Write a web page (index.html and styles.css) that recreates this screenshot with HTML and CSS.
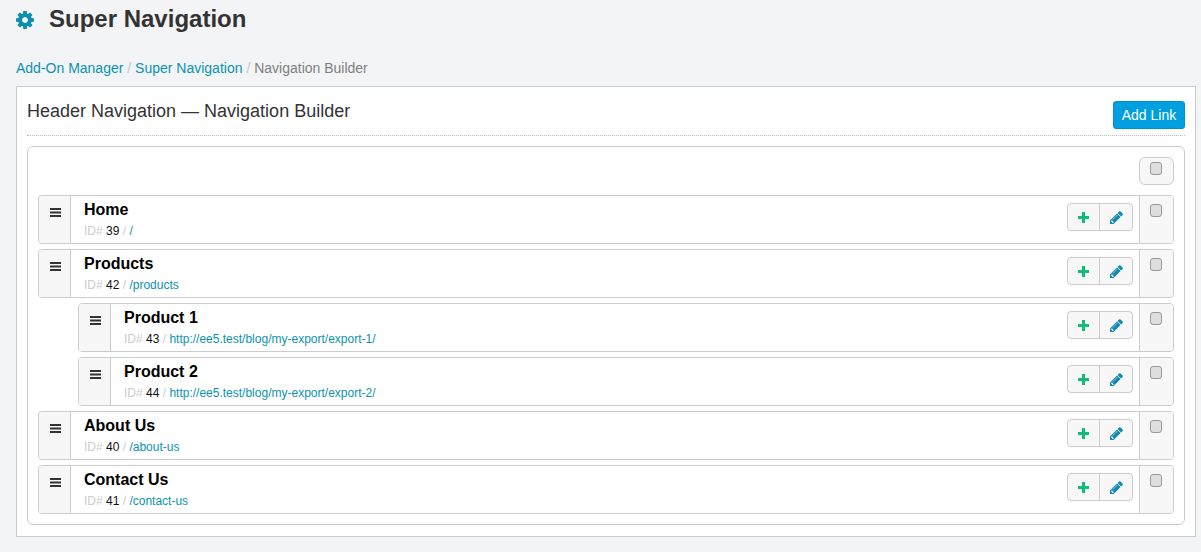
FILE: index.html
```html
<!DOCTYPE html>
<html lang="en">
<head>
<meta charset="utf-8">
<title>Super Navigation</title>
<link rel="stylesheet" href="styles.css">
</head>
<body>
<header class="page-head">
  <svg class="gear" viewBox="0 0 1536 1536"><path d="M1024 768q0-106-75-181t-181-75-181 75-75 181 75 181 181 75 181-75 75-181zm512-109v222q0 12-8 23t-20 13l-185 28q-19 54-39 91 35 50 107 138 10 12 10 25t-9 23q-27 37-99 108t-94 71q-12 0-26-9l-138-108q-44 23-91 38-16 136-29 186-7 28-36 28h-222q-14 0-24.500-8.500t-11.500-21.500l-28-184q-49-16-90-37l-141 107q-10 9-25 9-14 0-25-11-126-114-165-168-7-10-7-23 0-12 8-23 15-21 51-66.500t54-70.500q-27-50-41-99l-183-27q-13-2-21-12.500t-8-23.500v-222q0-12 8-23t19-13l186-28q14-46 39-92-40-57-107-138-10-12-10-24 0-10 9-23 26-36 98.500-107.500t94.500-71.500q13 0 26 10l138 107q44-23 91-38 16-136 29-186 7-28 36-28h222q14 0 24.500 8.500t11.500 21.500l28 184q49 16 90 37l142-107q9-9 24-9 13 0 25 10 129 119 165 170 7 8 7 22 0 12-8 23-15 21-51 66.500t-54 70.500q26 50 41 98l183 28q13 2 21 12.500t8 23.500z"/></svg>
  <h1>Super Navigation</h1>
</header>
<nav class="crumbs"><a href="#">Add-On Manager</a> <span class="sep">/</span> <a href="#">Super Navigation</a> <span class="sep">/</span> <span class="here">Navigation Builder</span></nav>
<main class="panel">
  <div class="panel-head">
    <h2>Header Navigation — Navigation Builder</h2>
    <a class="add" href="#">Add Link</a>
  </div>
  <div class="builder">
    <div class="all"><div class="all-cell"><input type="checkbox" class="check"></div></div>
    <ul class="tree">
      <li><div class="row"><div class="handle"><svg class="bars" viewBox="0 0 11 9"><path d="M0 0h11v2H0zM0 3.500h11v2H0zM0 7h11v2H0z"/></svg></div><div class="info"><div class="name">Home</div><div class="meta"><span class="id">ID#</span> 39 <span class="slash">/</span> <a href="#">/</a></div></div><div class="btns"><a class="btn" href="#"><svg class="plus" viewBox="0 0 11 11"><path d="M4 0h3v4h4v3H7v4H4V7H0V4h4z"/></svg></a><a class="btn" href="#"><svg class="pencil" viewBox="0 0 1536 1536"><path d="M363 1408l91-91-235-235-91 91v107h128v128h107zm523-928q0-22-22-22-10 0-17 7l-542 542q-7 7-7 17 0 22 22 22 10 0 17-7l542-542q7-7 7-17zm-54-192l416 416-832 832h-416v-416zm683 96q0 53-37 90l-166 166-416-416 166-165q36-38 90-38 53 0 91 38l235 234q37 39 37 91z"/></svg></a></div><div class="pick"><input type="checkbox" class="check"></div></div></li>
      <li><div class="row"><div class="handle"><svg class="bars" viewBox="0 0 11 9"><path d="M0 0h11v2H0zM0 3.500h11v2H0zM0 7h11v2H0z"/></svg></div><div class="info"><div class="name">Products</div><div class="meta"><span class="id">ID#</span> 42 <span class="slash">/</span> <a href="#">/products</a></div></div><div class="btns"><a class="btn" href="#"><svg class="plus" viewBox="0 0 11 11"><path d="M4 0h3v4h4v3H7v4H4V7H0V4h4z"/></svg></a><a class="btn" href="#"><svg class="pencil" viewBox="0 0 1536 1536"><path d="M363 1408l91-91-235-235-91 91v107h128v128h107zm523-928q0-22-22-22-10 0-17 7l-542 542q-7 7-7 17 0 22 22 22 10 0 17-7l542-542q7-7 7-17zm-54-192l416 416-832 832h-416v-416zm683 96q0 53-37 90l-166 166-416-416 166-165q36-38 90-38 53 0 91 38l235 234q37 39 37 91z"/></svg></a></div><div class="pick"><input type="checkbox" class="check"></div></div>
        <ul class="tree nested">
          <li><div class="row"><div class="handle"><svg class="bars" viewBox="0 0 11 9"><path d="M0 0h11v2H0zM0 3.500h11v2H0zM0 7h11v2H0z"/></svg></div><div class="info"><div class="name">Product 1</div><div class="meta"><span class="id">ID#</span> 43 <span class="slash">/</span> <a href="#">http://ee5.test/blog/my-export/export-1/</a></div></div><div class="btns"><a class="btn" href="#"><svg class="plus" viewBox="0 0 11 11"><path d="M4 0h3v4h4v3H7v4H4V7H0V4h4z"/></svg></a><a class="btn" href="#"><svg class="pencil" viewBox="0 0 1536 1536"><path d="M363 1408l91-91-235-235-91 91v107h128v128h107zm523-928q0-22-22-22-10 0-17 7l-542 542q-7 7-7 17 0 22 22 22 10 0 17-7l542-542q7-7 7-17zm-54-192l416 416-832 832h-416v-416zm683 96q0 53-37 90l-166 166-416-416 166-165q36-38 90-38 53 0 91 38l235 234q37 39 37 91z"/></svg></a></div><div class="pick"><input type="checkbox" class="check"></div></div></li>
          <li><div class="row"><div class="handle"><svg class="bars" viewBox="0 0 11 9"><path d="M0 0h11v2H0zM0 3.500h11v2H0zM0 7h11v2H0z"/></svg></div><div class="info"><div class="name">Product 2</div><div class="meta"><span class="id">ID#</span> 44 <span class="slash">/</span> <a href="#">http://ee5.test/blog/my-export/export-2/</a></div></div><div class="btns"><a class="btn" href="#"><svg class="plus" viewBox="0 0 11 11"><path d="M4 0h3v4h4v3H7v4H4V7H0V4h4z"/></svg></a><a class="btn" href="#"><svg class="pencil" viewBox="0 0 1536 1536"><path d="M363 1408l91-91-235-235-91 91v107h128v128h107zm523-928q0-22-22-22-10 0-17 7l-542 542q-7 7-7 17 0 22 22 22 10 0 17-7l542-542q7-7 7-17zm-54-192l416 416-832 832h-416v-416zm683 96q0 53-37 90l-166 166-416-416 166-165q36-38 90-38 53 0 91 38l235 234q37 39 37 91z"/></svg></a></div><div class="pick"><input type="checkbox" class="check"></div></div></li>
        </ul>
      </li>
      <li><div class="row"><div class="handle"><svg class="bars" viewBox="0 0 11 9"><path d="M0 0h11v2H0zM0 3.500h11v2H0zM0 7h11v2H0z"/></svg></div><div class="info"><div class="name">About Us</div><div class="meta"><span class="id">ID#</span> 40 <span class="slash">/</span> <a href="#">/about-us</a></div></div><div class="btns"><a class="btn" href="#"><svg class="plus" viewBox="0 0 11 11"><path d="M4 0h3v4h4v3H7v4H4V7H0V4h4z"/></svg></a><a class="btn" href="#"><svg class="pencil" viewBox="0 0 1536 1536"><path d="M363 1408l91-91-235-235-91 91v107h128v128h107zm523-928q0-22-22-22-10 0-17 7l-542 542q-7 7-7 17 0 22 22 22 10 0 17-7l542-542q7-7 7-17zm-54-192l416 416-832 832h-416v-416zm683 96q0 53-37 90l-166 166-416-416 166-165q36-38 90-38 53 0 91 38l235 234q37 39 37 91z"/></svg></a></div><div class="pick"><input type="checkbox" class="check"></div></div></li>
      <li><div class="row"><div class="handle"><svg class="bars" viewBox="0 0 11 9"><path d="M0 0h11v2H0zM0 3.500h11v2H0zM0 7h11v2H0z"/></svg></div><div class="info"><div class="name">Contact Us</div><div class="meta"><span class="id">ID#</span> 41 <span class="slash">/</span> <a href="#">/contact-us</a></div></div><div class="btns"><a class="btn" href="#"><svg class="plus" viewBox="0 0 11 11"><path d="M4 0h3v4h4v3H7v4H4V7H0V4h4z"/></svg></a><a class="btn" href="#"><svg class="pencil" viewBox="0 0 1536 1536"><path d="M363 1408l91-91-235-235-91 91v107h128v128h107zm523-928q0-22-22-22-10 0-17 7l-542 542q-7 7-7 17 0 22 22 22 10 0 17-7l542-542q7-7 7-17zm-54-192l416 416-832 832h-416v-416zm683 96q0 53-37 90l-166 166-416-416 166-165q36-38 90-38 53 0 91 38l235 234q37 39 37 91z"/></svg></a></div><div class="pick"><input type="checkbox" class="check"></div></div></li>
    </ul>
  </div>
</main>
</body>
</html>
```
FILE: styles.css
```css
* { box-sizing: border-box; }
html, body { height: 100%; }
body {
  margin: 0;
  padding: 0 5px 0 16px;
  overflow: hidden;
  background: #f2f4f6;
  color: #333;
  font-family: "Liberation Sans", Arial, sans-serif;
  font-size: 14px;
}
a { color: #0b93b0; text-decoration: none; }
.page-head { display: flex; align-items: center; height: 39px; }
.gear { width: 18px; height: 18px; fill: #0a8fac; margin-right: 15px; }
h1 { margin: 0 0 2px; font-size: 24px; font-weight: 700; color: #333; line-height: 37px; }
.crumbs { margin-top: 20px; height: 27px; line-height: 18px; font-size: 14px; }
.crumbs .sep { color: #c8c8c8; }
.crumbs .here { color: #808080; }
.panel {
  width: 1180px;
  height: 451px;
  background: #fff;
  border: 1px solid #ccc;
  padding: 14px 10px 10px;
}
.panel-head {
  display: flex;
  justify-content: space-between;
  height: 35px;
  border-bottom: 1px dotted #bbb;
}
h2 { margin: 0; font-size: 18px; font-weight: 400; color: #333; line-height: 21px; }
.add {
  width: 72px;
  height: 28px;
  background: #009fdf;
  border: 1px solid #0092cc;
  border-radius: 3px;
  color: #fff;
  font-size: 14px;
  line-height: 26px;
  text-align: center;
}
.builder {
  margin-top: 10px;
  height: 379px;
  border: 1px solid #ccc;
  border-radius: 6px;
  padding: 10px;
}
.all { display: flex; justify-content: flex-end; height: 38px; }
.all-cell {
  width: 35px;
  height: 28px;
  background: #f7f7f7;
  border: 1px solid #ccc;
  border-radius: 6px;
  display: flex;
  justify-content: center;
  padding: 4px 1px 0 0;
}
.tree { list-style: none; margin: 0; padding: 0; display: flex; flex-direction: column; gap: 5px; }
.nested { margin: 5px 0 0 40px; }
.row {
  display: flex;
  height: 49px;
  border: 1px solid #ccc;
  border-radius: 4px;
  overflow: hidden;
  background: #fff;
}
.handle {
  width: 32px;
  flex: none;
  background: #f7f7f7;
  border-right: 1px solid #ccc;
  display: flex;
  justify-content: center;
  padding: 12px 0 0 2px;
}
.bars { width: 11px; height: 9px; fill: #333; }
.info { flex: 1; padding: 4px 0 0 13px; }
.name { font-size: 16px; font-weight: 700; color: #000; line-height: 19px; }
.meta { margin-top: 4px; font-size: 12px; line-height: 16px; color: #111; }
.meta .id, .meta .slash { color: #ccc; }
.btns { display: flex; flex: none; height: 28px; margin: 7px 6px 0 0; border: 1px solid #ccc; border-radius: 4px; background: #f7f7f7; }
.btn { width: 31px; display: flex; align-items: center; justify-content: center; }
.btn + .btn { width: 33px; border-left: 1px solid #ccc; }
.plus { width: 11px; height: 11px; fill: #10bd78; }
.pencil { width: 13px; height: 13px; fill: #1189ab; }
.pick {
  width: 34px;
  flex: none;
  background: #f7f7f7;
  border-left: 1px solid #ccc;
  display: flex;
  justify-content: center;
  padding: 8px 1px 0 0;
}
.check {
  appearance: none;
  display: block;
  width: 12px;
  height: 13px;
  margin: 0;
  background: #dedede;
  border: 1px solid #999;
  border-radius: 3px;
}
```
